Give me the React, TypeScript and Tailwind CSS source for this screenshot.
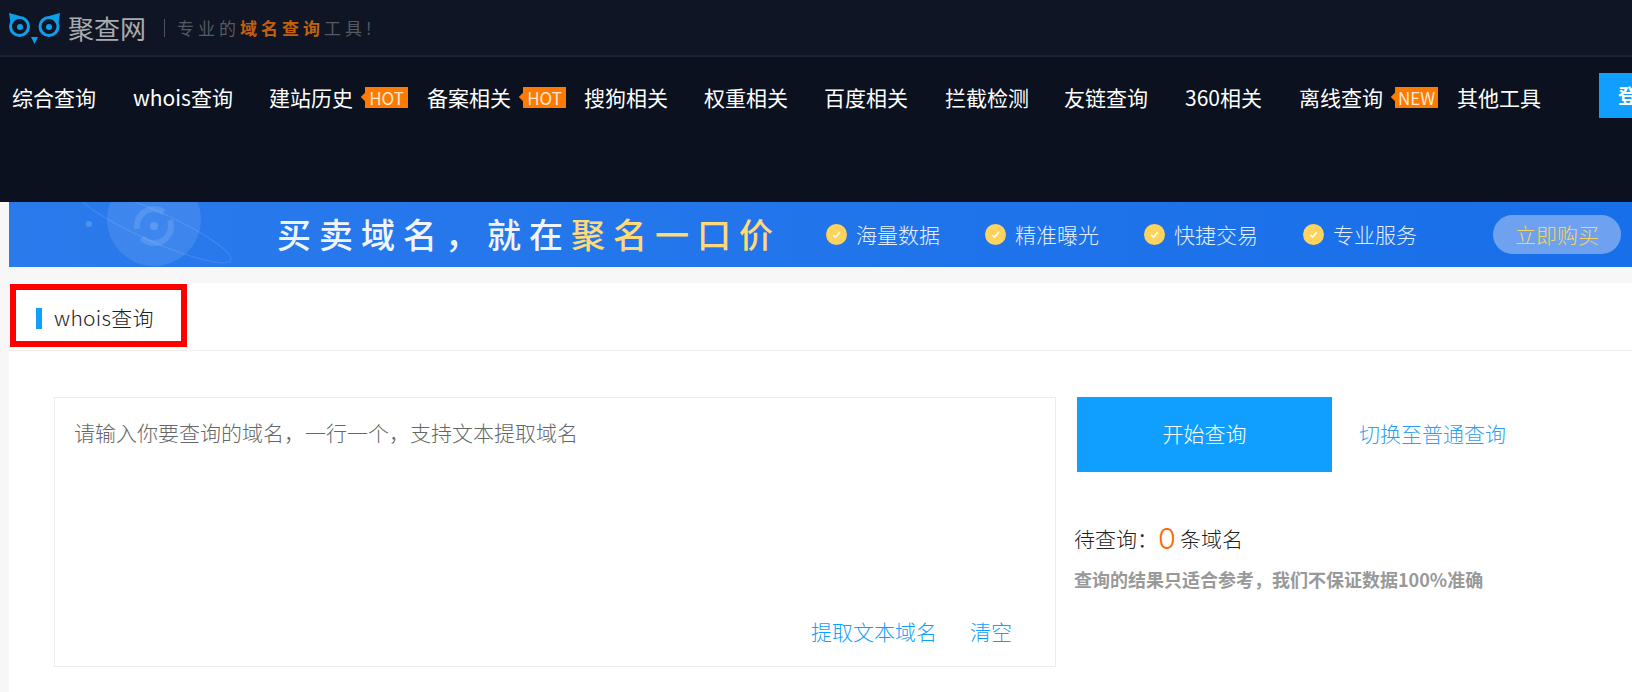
const cjk = { fontFamily: '"Noto Sans CJK SC", "Noto Sans", sans-serif' }

const navItems = [
  { label: '综合查询', w: 'w-[121px]' },
  { label: 'whois查询', w: 'w-[136px]' },
  { label: '建站历史', w: 'w-[158px]', tag: 'HOT' },
  { label: '备案相关', w: 'w-[157px]', tag: 'HOT' },
  { label: '搜狗相关', w: 'w-[120px]' },
  { label: '权重相关', w: 'w-[120px]' },
  { label: '百度相关', w: 'w-[121px]' },
  { label: '拦截检测', w: 'w-[119px]' },
  { label: '友链查询', w: 'w-[121px]' },
  { label: '360相关', w: 'w-[114px]' },
  { label: '离线查询', w: 'w-[158px]', tag: 'NEW' },
  { label: '其他工具', w: 'w-[142px]' },
]

function Owl() {
  return (
    <svg width="52" height="32" viewBox="0 0 52 32" fill="none" className="shrink-0 mt-[3px]">
      <circle cx="10.500" cy="13.500" r="9" stroke="#0f9fe8" strokeWidth="3" />
      <circle cx="40" cy="13.500" r="9" stroke="#0f9fe8" strokeWidth="3" />
      <circle cx="11" cy="14" r="3" fill="#0f9fe8" />
      <circle cx="40" cy="14" r="3" fill="#0f9fe8" />
      <path d="M0 0 L11 3 L1.500 10 Z" fill="#0f9fe8" />
      <path d="M51 0 L40 3 L49.500 10 Z" fill="#0f9fe8" />
      <path d="M22 24 H29 L25.500 31 Z" fill="#0f9fe8" />
    </svg>
  )
}

function Benefit({ label }: { label: string }) {
  return (
    <div className="flex items-center w-[159px] shrink-0">
      <span className="w-[21px] h-[21px] rounded-full bg-[#ffd45e] flex items-center justify-center shrink-0">
        <svg width="11" height="11" viewBox="0 0 12 12" fill="none">
          <path d="M2.500 6.500 L5 9 L9.500 3.500" stroke="#fff" strokeWidth="1.500" />
        </svg>
      </span>
      <span className="ml-[9px] text-[21px] leading-none text-[#e4effd] whitespace-nowrap">{label}</span>
    </div>
  )
}

export default function App() {
  return (
    <div className="w-[1632px] h-[692px] overflow-hidden bg-[#f7f7f7] font-light" style={cjk}>
      <header className="h-[202px] bg-[#0b111e]">
        <div className="h-[57px] bg-[#0f1524] border-b-2 border-[#1c2230] flex items-center pl-[9px]">
          <Owl />
          <span className="ml-[7px] text-[26px] font-normal text-[#a9abae] leading-none">聚查网</span>
          <span className="ml-[18px] w-[1px] h-[18px] bg-[#4d515a]" />
          <span className="ml-[12px] text-[17px] font-normal tracking-[4px] text-[#565a63] leading-none whitespace-nowrap">
            专业的<span className="font-bold text-[#c1610e]">域名查询</span>工具!
          </span>
        </div>
        <nav className="flex items-start h-[85px] pl-[12px] pt-[25px] text-white text-[21px] font-normal">
          {navItems.map(item => (
            <div key={item.label} className={`${item.w} shrink-0 flex items-center h-[30px]`}>
              <span className="whitespace-nowrap leading-none">{item.label}</span>
              {item.tag && (
                <span className="relative ml-[12px] w-[43px] h-[21px] bg-[#ff7a00] text-[#ffe9d4] text-[17px] font-normal leading-[21px] text-center">
                  <span className="absolute -left-[3px] top-[7px] w-[6px] h-[6px] rotate-45 bg-[#ff7a00]" />
                  <span className="relative">{item.tag}</span>
                </span>
              )}
            </div>
          ))}
          <div className="ml-auto -mt-[9px] w-[33px] h-[45px] bg-[#109fff] text-white text-[20px] font-bold pl-[19px] flex items-center overflow-hidden whitespace-nowrap">
            登录
          </div>
        </nav>
      </header>

      <div className="ml-[9px] h-[65px] bg-gradient-to-r from-[#2a7aec] to-[#176fe9] relative overflow-hidden flex items-center">
        <svg className="absolute left-[65px] top-0" width="170" height="65" viewBox="0 0 170 65" fill="none">
          <circle cx="80" cy="17" r="47" fill="#fff" fillOpacity="0.1" />
          <ellipse cx="80" cy="24" rx="84" ry="15" transform="rotate(24 80 24)" stroke="#fff" strokeOpacity="0.12" />
          <circle cx="15" cy="22" r="3" fill="#fff" fillOpacity="0.18" />
          <circle cx="80" cy="24" r="17" stroke="#fff" strokeOpacity="0.12" strokeWidth="6" strokeDasharray="40 10" />
          <circle cx="80" cy="24" r="4" fill="#fff" fillOpacity="0.16" />
        </svg>
        <div className="relative ml-[268px] w-[512px] -mt-[1px] text-[34px] font-medium tracking-[8px] text-[#f0f5fd] whitespace-nowrap leading-none">
          买卖域名，就在<span className="text-[#ffd97a]">聚名一口价</span>
        </div>
        <div className="relative ml-[37px] flex">
          <Benefit label="海量数据" />
          <Benefit label="精准曝光" />
          <Benefit label="快捷交易" />
          <Benefit label="专业服务" />
        </div>
        <div className="relative ml-auto mr-[11px] w-[128px] h-[39px] rounded-full bg-[#6ea1ef] text-[#f7d365] text-[21px] flex items-center justify-center">
          立即购买
        </div>
      </div>

      <main className="mt-[16px] ml-[9px] bg-white h-[409px]">
        <div className="h-[68px] pt-[3px] border-b border-[#eeeeee] flex items-center">
          <div className="relative flex items-center h-full pl-[27px]">
            <span className="w-[6px] h-[21px] bg-[#109fff]" />
            <span className="ml-[12px] text-[21px] text-[#222] tracking-[0.300px]">whois查询</span>
          </div>
          <span className="absolute left-[10px] top-[284px] w-[177px] h-[63px] border-[6px] border-[#ff0000]" />
        </div>
        <div className="flex pl-[45px] pt-[46px]">
          <div className="w-[1002px] h-[270px] border border-[#ececec] flex flex-col justify-between">
            <p className="pl-[19px] pt-[19px] text-[21px] leading-[30px] text-[#666]">
              请输入你要查询的域名，一行一个，支持文本提取域名
            </p>
            <div className="flex justify-end pr-[43px] pb-[20px] gap-[33px] text-[21px] leading-[30px] text-[#109fff]">
              <span>提取文本域名</span>
              <span>清空</span>
            </div>
          </div>
          <div className="ml-[21px]">
            <div className="flex items-center">
              <div className="w-[255px] h-[75px] pb-[2px] bg-[#109fff] text-white text-[21px] flex items-center justify-center">
                开始查询
              </div>
              <span className="ml-[27px] pb-[2px] text-[21px] text-[#2f9ff5]">切换至普通查询</span>
            </div>
            <div className="mt-[49px] -ml-[3px] flex items-center text-[21px] text-[#222] h-[36px]">
              待查询：
              <span className="text-[29px] font-['Inter'] text-[#ff6a00] mr-[4px]">0</span>
              条域名
            </div>
            <p className="-ml-[3px] mt-[9px] text-[18px] font-bold text-[#999]">
              查询的结果只适合参考，我们不保证数据100%准确
            </p>
          </div>
        </div>
      </main>
    </div>
  )
}
